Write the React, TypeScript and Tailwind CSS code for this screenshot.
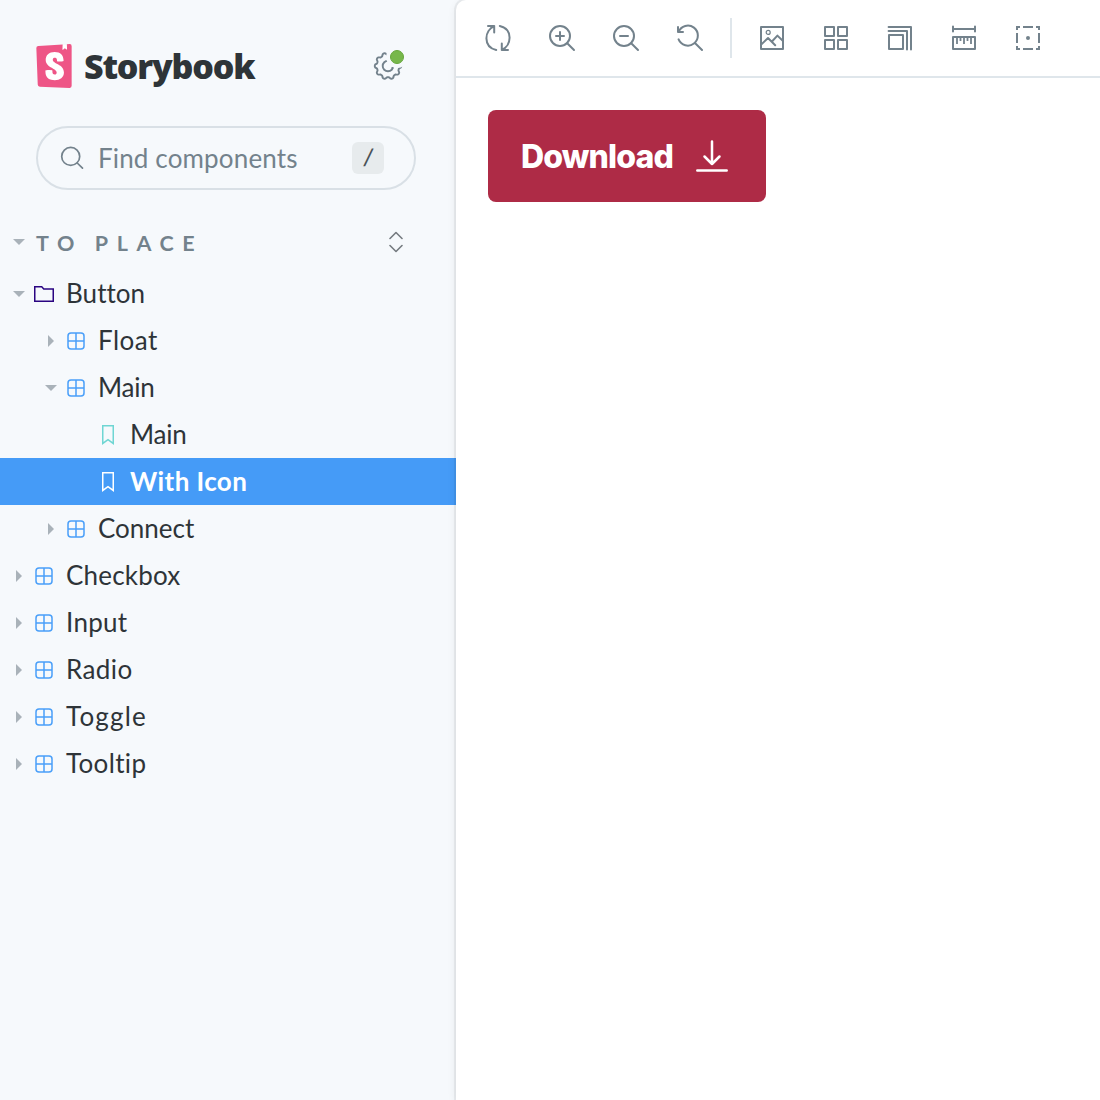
import type { ReactNode } from "react";
import { SiStorybook } from "react-icons/si";

function ToolIcon({ children }: { children: ReactNode }) {
  return (
    <button className="flex h-14 w-14 items-center justify-center text-[#73828c]">
      <svg width="28" height="28" viewBox="0 0 14 14" fill="none" stroke="currentColor" strokeWidth="1" strokeLinecap="round" strokeLinejoin="round">
        {children}
      </svg>
    </button>
  );
}

function Magnifier() {
  return (
    <>
      <circle cx="6" cy="6" r="5" />
      <path d="M9.6 9.6 13 13" />
    </>
  );
}

function Caret({ open }: { open: boolean }) {
  return (
    <svg className="shrink-0" width="12" height="12" viewBox="0 0 12 12" fill="#a9b2b9">
      {open ? <path d="M0 3h12L6 9z" /> : <path d="M3 0v12l6-6z" />}
    </svg>
  );
}

function ComponentIcon() {
  return (
    <svg width="18" height="18" viewBox="0 0 18 18" fill="none" stroke="#4a9ff9" strokeWidth="1.5">
      <rect x="1" y="1" width="16" height="16" rx="3" />
      <path d="M9 1v16M1 9h16" />
    </svg>
  );
}

function FolderIcon() {
  return (
    <svg width="20" height="16" viewBox="0 0 20 16" fill="none" stroke="#2a0481" strokeWidth="1.5">
      <path d="M.75.75h7l2 2.2h9.5v12.3H.75z" />
    </svg>
  );
}

function StoryIcon({ color }: { color: string }) {
  return (
    <svg width="12" height="20" viewBox="0 0 12 20" fill="none" stroke={color} strokeWidth="1.5">
      <path d="M.75.75h10.5v17.7L6 14.6.75 18.45z" />
    </svg>
  );
}

type Row = { label: string; depth: number; kind: "folder" | "component" | "story"; open?: boolean; active?: boolean; track: string };

const rows: Row[] = [
  { label: "Button", depth: 0, kind: "folder", open: true, track: "tracking-[0.05px]" },
  { label: "Float", depth: 1, kind: "component", track: "tracking-[0.5px]" },
  { label: "Main", depth: 1, kind: "component", open: true, track: "tracking-[-0.2px]" },
  { label: "Main", depth: 2, kind: "story", track: "tracking-[-0.2px]" },
  { label: "With Icon", depth: 2, kind: "story", active: true, track: "tracking-[0.4px]" },
  { label: "Connect", depth: 1, kind: "component", track: "tracking-[0px]" },
  { label: "Checkbox", depth: 0, kind: "component", track: "tracking-[0.2px]" },
  { label: "Input", depth: 0, kind: "component", track: "tracking-[0.3px]" },
  { label: "Radio", depth: 0, kind: "component", track: "tracking-[0.4px]" },
  { label: "Toggle", depth: 0, kind: "component", track: "tracking-[1.2px]" },
  { label: "Tooltip", depth: 0, kind: "component", track: "tracking-[0.35px]" },
];

const indent = ["pl-[13px]", "pl-[45px]", "pl-[77px]"];

function TreeRow({ row }: { row: Row }) {
  return (
    <div className={`flex h-[47px] items-center ${indent[row.depth]} ${row.active ? "bg-[#459bf7] font-bold text-white" : "text-[#2e3438]"}`}>
      <span className="flex w-3">{row.kind !== "story" && <Caret open={!!row.open} />}</span>
      <span className="ml-[5px] flex w-7 justify-center">
        {row.kind === "folder" && <FolderIcon />}
        {row.kind === "component" && <ComponentIcon />}
        {row.kind === "story" && <StoryIcon color={row.active ? "#ffffff" : "#6fd6d3"} />}
      </span>
      <span className={`ml-2 pb-px text-[26px] leading-8 whitespace-nowrap ${row.track}`}>{row.label}</span>
    </div>
  );
}

const gearPath =
  Array.from({ length: 121 }, (_, i) => {
    const a = (i / 120) * Math.PI * 2;
    const r = 12.2 + 1.1 * Math.tanh(1.6 * Math.cos(10 * (a - Math.PI / 10 - Math.PI / 2)));
    return `${i ? "L" : "M"}${(16 + r * Math.cos(a)).toFixed(2)} ${(16 + r * Math.sin(a)).toFixed(2)}`;
  }).join("") + "Z";

function SettingsIcon() {
  return (
    <svg width="32" height="32" viewBox="0 0 32 32" fill="none">
      <path d={gearPath} stroke="#73828c" strokeWidth="1.9" strokeLinejoin="round" />
      <circle cx="16" cy="16" r="5.3" stroke="#73828c" strokeWidth="1.9" />
      <circle cx="25" cy="7" r="11" fill="#f6f9fc" />
      <circle cx="20.2" cy="18" r=".9" fill="#73828c" />
      <circle cx="25" cy="7" r="6.5" fill="#77b74b" stroke="#66a63c" />
    </svg>
  );
}

export default function App() {
  return (
    <div className="flex h-[1100px] w-[1100px] overflow-hidden bg-[#f6f9fc] font-['Lato','Noto_Sans',sans-serif]">
      <aside className="w-[456px] shrink-0">
        <header className="flex h-[126px] items-start pt-11 pl-9">
          <div className="flex h-11 w-9 justify-center overflow-hidden bg-[linear-gradient(white,white),linear-gradient(white,white)] bg-[length:28px_36px,7px_8px] bg-[position:center,25px_1px] bg-no-repeat text-[#ee5586]">
            <SiStorybook className="h-11 w-11 shrink-0" />
          </div>
          <h1 className="-mt-px ml-3 w-[184px] font-['Open_Sans',sans-serif] text-[34px] leading-[46px] font-extrabold tracking-[-1.2px] text-[#2e3438]">Storybook</h1>
          <button className="mt-[6px] ml-[104px]">
            <SettingsIcon />
          </button>
        </header>

        <div className="ml-9 flex h-16 w-[380px] items-center rounded-full border-2 border-[#d9e0e6] pr-[30px] pl-[22px] text-[#73828c]">
          <svg width="24" height="24" viewBox="0 0 24 24" fill="none" stroke="currentColor" strokeWidth="1.7" strokeLinecap="round">
            <circle cx="10.7" cy="10.4" r="9" />
            <path d="m17.2 17 5.3 5.2" />
          </svg>
          <span className="ml-[14px] flex-1 text-[26px] leading-8 tracking-[0.15px]">Find components</span>
          <kbd className="flex h-8 w-8 items-center justify-center rounded-md bg-[#e7ebed] font-['Liberation_Sans',sans-serif] text-[24px] text-[#4a5257]">
            <span className="-skew-x-12">/</span>
          </kbd>
        </div>

        <div className="mt-[28px] flex h-[48px] items-center pl-[13px]">
          <Caret open />
          <span className="ml-[11px] flex-1 pt-px text-[21.5px] leading-6 font-bold tracking-[8.6px] text-[#73828c] [word-spacing:-2px]">TO PLACE</span>
          <svg className="mr-[53px]" width="14" height="22" viewBox="0 0 14 22" fill="none" stroke="#757b80" strokeWidth="1.6" strokeLinecap="round" strokeLinejoin="round">
            <path d="m1 7.5 6-6 6 6M1 14.5l6 6 6-6" />
          </svg>
        </div>

        <nav className="mt-1">
          {rows.map((row, i) => (
            <TreeRow key={i} row={row} />
          ))}
        </nav>
      </aside>

      <main className="flex-1 rounded-tl-[10px] bg-white shadow-[0_0_0_2px_rgba(0,0,0,0.05),0_2px_10px_rgba(0,0,0,0.08)]">
        <div className="flex h-[78px] items-center gap-2 rounded-tl-[10px] border-b-2 border-[#dfe6eb] pl-[14px]">
          <ToolIcon>
            <path d="M2 1H5.1v3.2M5.1 1C.1 3.2-.6 11.4 6.1 13M7.9 1C14.6 2.6 13.9 10.8 8.9 13M8.9 9.8V13H12" />
          </ToolIcon>
          <ToolIcon>
            <Magnifier />
            <path d="M4 6h4M6 4v4" />
          </ToolIcon>
          <ToolIcon>
            <Magnifier />
            <path d="M4 6h4" />
          </ToolIcon>
          <ToolIcon>
            <path d="M1 1.5V4h2.5M1.3 3.9A5 5 0 1 1 1.3 7.7M9.6 9.6 13 13" />
          </ToolIcon>
          <div className="mr-1 ml-1 h-10 w-[2px] bg-[#dfe6eb]" />
          <ToolIcon>
            <rect x="1.5" y="1.5" width="11" height="11" />
            <circle cx="5.1" cy="4.2" r="1" strokeWidth=".6" />
            <path d="M1.7 10.2 5 7l3.6 3.6M7.1 8.6l2.6-2.8 2.7 2.6" />
          </ToolIcon>
          <ToolIcon>
            <path d="M1.5 1.5H6V6H1.5zM8 1.5h4.5V6H8zM1.5 8H6v4.5H1.5zM8 8h4.5v4.5H8z" />
          </ToolIcon>
          <ToolIcon>
            <path d="M1.5 5.5h7v7h-7zM1.3 3.5h9.2v9.2M1.3 1.5h11.2v11.2" />
          </ToolIcon>
          <ToolIcon>
            <path d="M1.5 1.3v2.4M12.5 1.3v2.4M1.5 2.5h11M1.5 6.5h11v6h-11z" />
            <path strokeLinecap="butt" strokeWidth=".9" d="M3.5 6.5V10M5.25 6.5v2M7 6.5V10M8.75 6.5v2M10.5 6.5V10" />
          </ToolIcon>
          <ToolIcon>
            <path strokeLinecap="butt" strokeLinejoin="miter" d="M1.5 3V1.5H3M4.5 1.5h5M11 1.5h1.5V3M12.5 4.5v5M12.5 11v1.5H11M9.5 12.5h-5M3 12.5H1.5V11M1.5 9.5v-5" />
            <circle cx="7" cy="7" r="1" fill="currentColor" stroke="none" />
          </ToolIcon>
        </div>

        <div className="p-8">
          <button className="flex h-[92px] w-[278px] items-center rounded-lg bg-[#ae2b46] pl-[33px] text-white">
            <span className="w-[175px] pt-[2px] text-left font-['Inter',sans-serif] text-[32px] leading-10 font-extrabold tracking-[-0.85px]">Download</span>
            <svg width="32" height="32" viewBox="0 0 32 32" fill="none" stroke="currentColor" strokeWidth="2.5" strokeLinecap="round" strokeLinejoin="round">
              <path d="M16 1.5v22.5M8.5 16.5 16 24l7.5-7.5M1.3 30.5h29.4" />
            </svg>
          </button>
        </div>
      </main>
    </div>
  );
}
